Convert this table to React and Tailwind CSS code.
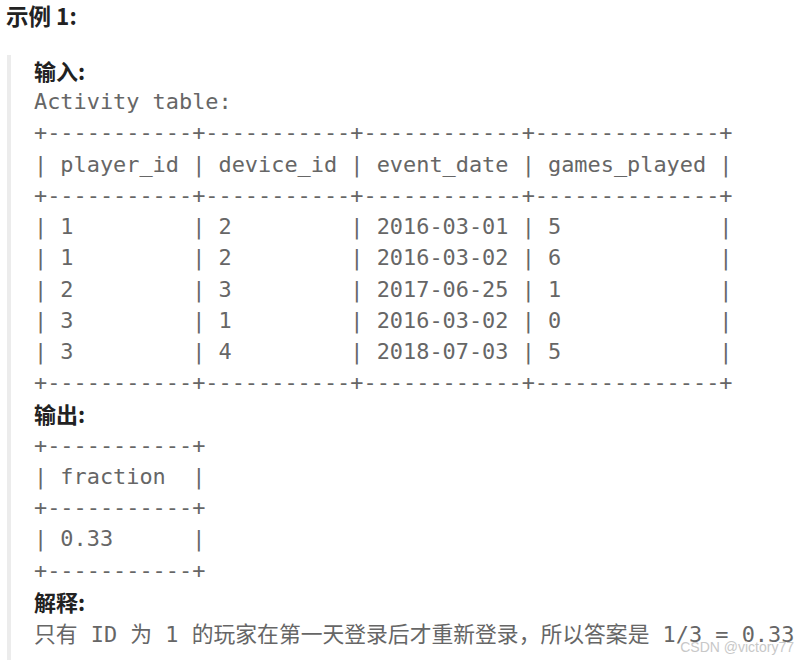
import React from 'react';

const mono = "font-['DejaVu_Sans_Mono','Liberation_Mono','Noto_Sans_CJK_SC',monospace]";
const cjk = "font-['Noto_Sans_CJK_SC','Noto_Sans',sans-serif]";

const activity = [
  '+-----------+-----------+------------+--------------+',
  '| player_id | device_id | event_date | games_played |',
  '+-----------+-----------+------------+--------------+',
  '| 1         | 2         | 2016-03-01 | 5            |',
  '| 1         | 2         | 2016-03-02 | 6            |',
  '| 2         | 3         | 2017-06-25 | 1            |',
  '| 3         | 1         | 2016-03-02 | 0            |',
  '| 3         | 4         | 2018-07-03 | 5            |',
  '+-----------+-----------+------------+--------------+',
];

const result = [
  '+-----------+',
  '| fraction  |',
  '+-----------+',
  '| 0.33      |',
  '+-----------+',
];

function Label({ children }) {
  return (
    <div className={`${cjk} text-[22px] font-bold text-[#222] leading-[31.22px] h-[31.22px]`}>
      {children}
    </div>
  );
}

function Code({ text }) {
  return (
    <div className={`${mono} text-[21.9px] text-[#666] leading-[31.22px] h-[31.22px] whitespace-pre`}>
      {text}
    </div>
  );
}

function Cn({ children }) {
  return <span className={`${cjk} text-[21.8px]`}>{children}</span>;
}

export default function App() {
  return (
    <div className="relative w-[806px] h-[660px] overflow-hidden bg-white">
      <div className={`${cjk} pl-[6px] text-[22.5px] font-bold text-[#222] leading-[30px]`}>
        示例 1:
      </div>

      <div className="mt-[25px] ml-[7px] border-l-4 border-[#ececec] pl-[23px] pb-[40px]">
        <Label>输入:</Label>
        <Code text="Activity table:" />
        {activity.map((l, i) => <Code key={i} text={l} />)}
        <Label>输出:</Label>
        {result.map((l, i) => <Code key={i} text={l} />)}
        <Label>解释:</Label>
        <div className={`${mono} text-[21.9px] text-[#666] leading-[31.22px] h-[31.22px] whitespace-pre`}>
          <Cn>只有</Cn> ID <Cn>为</Cn> 1 <Cn>的玩家在第一天登录后才重新登录，所以答案是</Cn> 1/3 = 0.33
        </div>
      </div>

      <div className="absolute right-[12px] bottom-[6px] font-['Liberation_Sans',sans-serif] text-[14px] text-[#c8c8c8] leading-none">
        CSDN @victory77
      </div>
    </div>
  );
}
